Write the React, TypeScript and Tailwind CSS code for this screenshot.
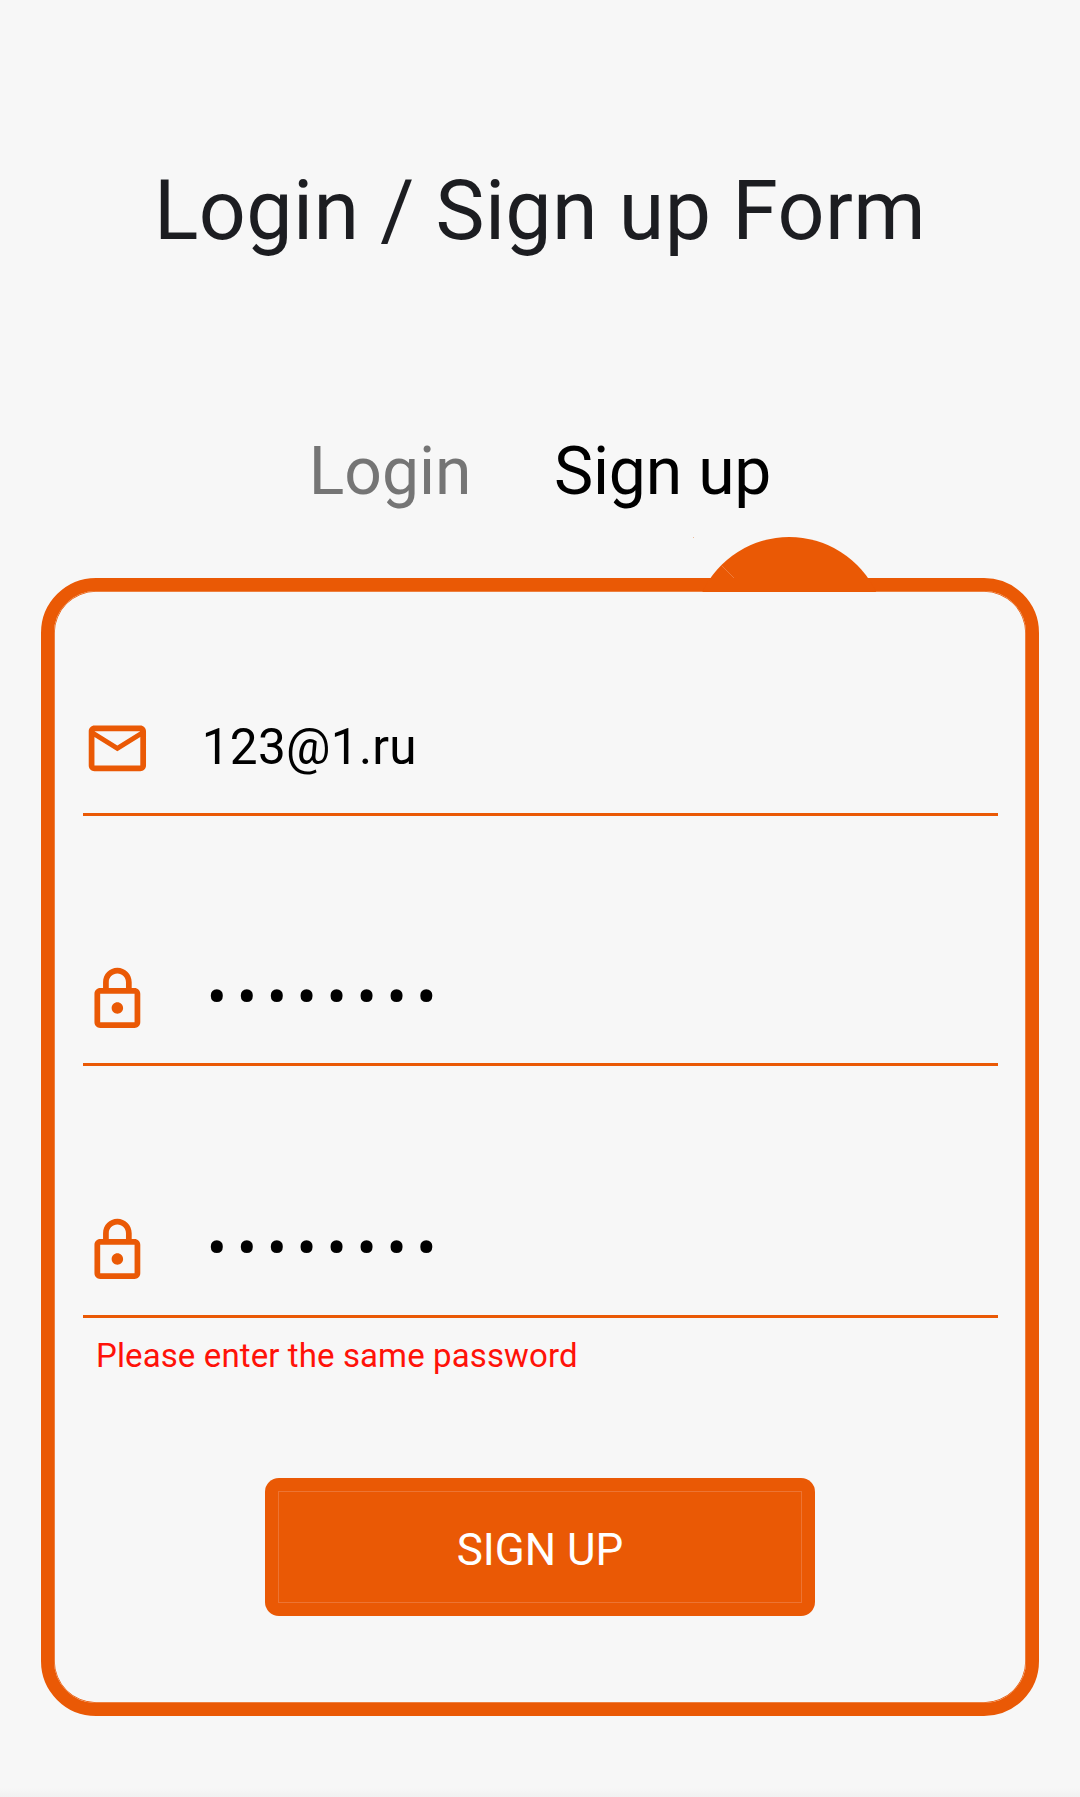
import React from "react";

const MAIL =
  "M22 6c0-1.1-.9-2-2-2H4c-1.1 0-2 .9-2 2v12c0 1.1.9 2 2 2h16c1.1 0 2-.9 2-2V6zm-2 0l-8 5-8-5h16zm0 12H4V8l8 5 8-5v10z";
const LOCK =
  "M12 17c1.1 0 2-.9 2-2s-.9-2-2-2-2 .9-2 2 .9 2 2 2zm6-9h-1V6c0-2.76-2.24-5-5-5S7 3.24 7 6v2H6c-1.1 0-2 .9-2 2v10c0 1.1.9 2 2 2h12c1.1 0 2-.9 2-2V10c0-1.1-.9-2-2-2zM9 6c0-1.66 1.34-3 3-3s3 1.34 3 3v2H9V6zm9 14H6V10h12v10z";

function Icon({ d }: { d: string }) {
  return (
    <svg viewBox="0 0 24 24" className="size-[68.75px] shrink-0 fill-[#ea5905]">
      <path d={d} />
    </svg>
  );
}

function Field({
  icon,
  pad,
  children,
}: {
  icon: string;
  pad: string;
  children: React.ReactNode;
}) {
  return (
    <div className={`flex h-[138px] items-start border-b-3 border-[#ea5905] ${pad}`}>
      <Icon d={icon} />
      <div className="ml-[50px] text-[49.5px] leading-[66px] tracking-[0.28px] text-black">
        {children}
      </div>
    </div>
  );
}

function Password() {
  return (
    <span className="block pl-[5px] text-[60px] leading-[66px] tracking-[9.7px]">••••••••</span>
  );
}

/* Half-dome that marks the selected tab on the card's top edge. */
function TabMarker() {
  return (
    <svg
      viewBox="0 0 193 55"
      className="absolute top-[-54px] left-[639px] h-[55px] w-[193px]"
    >
      <path d="M9.3 55A96.25 96.25 0 0 1 183.2 55Z" fill="#ea5905" />
      <path d="M28.5 28.5L41 41" stroke="#f08a50" strokeWidth="0.7" />
      <rect x="0" y="0" width="1" height="1" fill="#eebd9f" />
    </svg>
  );
}

export default function App() {
  return (
    <main className="flex h-[1797px] w-[1080px] flex-col overflow-hidden bg-[#f7f7f7] font-[Roboto,sans-serif]">
      <h1 className="mt-[161px] text-center text-[82.5px] leading-[100px] font-normal tracking-[0.39px] text-[#1c1d21]">
        Login / Sign up Form
      </h1>
      <nav className="mt-[171px] flex h-[80px] justify-center gap-[82.5px] text-[66px] leading-[80px]">
        <button className="text-[#757575]">Login</button>
        <button className="tracking-[-0.2px] text-black">Sign up</button>
      </nav>
      <section className="relative mx-[41px] mt-[66px] h-[1138px] shrink-0 rounded-[55px] border-13 border-[#ea5905] px-[29px] shadow-[inset_0_0_0_0.75px_#ea5905]">
        <TabMarker />
        <div className="mt-[87px] w-[915px]">
          <Field icon={MAIL} pad="pt-[35.5px]">
            123@1.ru
          </Field>
        </div>
        <div className="mt-[112px] w-[915px]">
          <Field icon={LOCK} pad="pt-[37px]">
            <Password />
          </Field>
        </div>
        <div className="mt-[114px] w-[915px]">
          <Field icon={LOCK} pad="pt-[36px]">
            <Password />
          </Field>
        </div>
        <p className="mt-[16px] ml-[13px] text-[33px] leading-[44px] tracking-[0.11px] text-[#ff1208]">
          Please enter the same password
        </p>
        <button className="mx-auto mt-[100px] block h-[138px] w-[550px] rounded-[14px] bg-[#ea5905] p-[13px] text-[44px] text-white">
          <span className="flex size-full items-center justify-center border border-[#ed7433] pt-[6px]">
            SIGN UP
          </span>
        </button>
      </section>
      <div className="mt-[72px] h-[9px] shrink-0 bg-linear-to-b from-[#f7f7f7] to-[#f1f1f1]" />
    </main>
  );
}
